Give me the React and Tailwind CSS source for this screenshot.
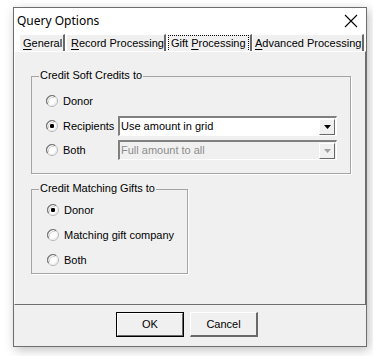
import React from "react";

const ui = { fontFamily: '"Liberation Sans", Arial, sans-serif' };

function Radio({ checked }) {
  return (
    <svg width="12" height="12" viewBox="0 0 12 12" className="shrink-0">
      <circle cx="6" cy="6" r="5.5" fill="#ffffff" stroke="#b4b4b4" strokeWidth="1" />
      <path d="M1.7 9.1 A5.3 5.3 0 0 1 9.1 1.7" fill="none" stroke="#7a7a7a" strokeWidth="1.2" />
      <path d="M2.8 8.2 A4.1 4.1 0 0 1 8.2 2.8" fill="none" stroke="#cfcfcf" strokeWidth="1" />
      <path d="M10 3 A5.3 5.3 0 0 1 3 10" fill="none" stroke="#e6e6e6" strokeWidth="1" />
      {checked && <rect x="4" y="4" width="4" height="4" rx="1.3" fill="#000" />}
    </svg>
  );
}

function Option({ checked, children, className = "" }) {
  return (
    <div className={`flex items-center gap-[5px] h-[14px] whitespace-nowrap ${className}`}>
      <Radio checked={checked} />
      <span className="text-[11px] text-black leading-none">{children}</span>
    </div>
  );
}

function Combo({ value, disabled }) {
  return (
    <div
      className={`flex items-center w-[219px] h-[20px] border-t-2 border-l-2 border-t-[#808080] border-l-[#808080] border-b border-r border-b-[#fff] border-r-[#fff] ${
        disabled ? "bg-[#f0f0f0]" : "bg-white"
      }`}
    >
      <span
        className={`flex-1 pl-[1px] text-[11px] leading-none whitespace-nowrap ${
          disabled ? "text-[#8d8d8d]" : "text-black"
        }`}
      >
        {value}
      </span>
      <div className="w-[16px] h-[16px] mr-[1px] bg-[#f0f0f0] border-t border-l border-t-[#fff] border-l-[#fff] border-b border-r border-b-[#696969] border-r-[#696969] flex items-center justify-center">
        <svg width="7" height="4" viewBox="0 0 7 4">
          <path d="M0 0 H7 L3.5 4 Z" fill={disabled ? "#a0a0a0" : "#000"} />
        </svg>
      </div>
    </div>
  );
}

function Group({ label, className = "", children }) {
  return (
    <div className={`relative border border-[#a5a5a5] shadow-[1px_1px_0_#ffffff] ${className}`}>
      <span className="absolute -top-[7px] left-[7px] px-[1px] bg-[#f0f0f0] text-[11px] leading-none text-black whitespace-nowrap">
        {label}
      </span>
      {children}
    </div>
  );
}

function Tab({ children, active, className = "" }) {
  return (
    <div
      className={`h-[17px] shrink-0 flex items-center whitespace-nowrap bg-[#f0f0f0] border-l border-t border-l-[#fff] border-t-[#fff] border-r-2 border-r-[#696969] text-[11px] leading-none text-black ${className}`}
    >
      {active ? (
        <span className="outline-1 outline-dotted outline-black outline-offset-[2px]">
          {children}
        </span>
      ) : (
        children
      )}
    </div>
  );
}

const U = ({ children }) => <span className="underline underline-offset-[2px]">{children}</span>;

export default function App() {
  return (
    <div className="w-[373px] h-[356px] bg-white overflow-hidden pt-[7px] pl-[13px]" style={ui}>
      <div className="w-[354px] h-[340px] border border-[#6e6e6e] bg-[#f0f0f0] shadow-[2px_3px_10px_rgba(0,0,0,0.25)] flex flex-col">
        <div className="h-[26px] bg-white flex items-center justify-between pl-[3px] pr-[8px]">
          <span
            className="text-[12px] text-black"
            style={{ fontFamily: '"Noto Sans", "Open Sans", sans-serif' }}
          >
            Query Options
          </span>
          <svg width="14" height="14" viewBox="0 0 14 14">
            <path d="M1 1 L13 13 M13 1 L1 13" stroke="#000" strokeWidth="1.1" />
          </svg>
        </div>
        <div className="h-[17px] flex pl-[5px] bg-white">
          <Tab className="w-[46px] pl-[3px]">
            <span><U>G</U>eneral</span>
          </Tab>
          <Tab className="w-[100px] pl-[4px] ml-[1px]">
            <span><U>R</U>ecord Processing</span>
          </Tab>
          <Tab active className="w-[85px] pl-[3px] ml-[1px]">
            <span>Gift <U>P</U>rocessing</span>
          </Tab>
          <Tab className="w-[112px] pl-[2px]">
            <span><U>A</U>dvanced Processing</span>
          </Tab>
        </div>
        <div className="h-[254px] border-t border-l border-t-[#fff] border-l-[#fff] border-b border-r border-b-[#6e6e6e] border-r-[#6e6e6e] pt-[24px] pl-[16px]">
          <Group label="Credit Soft Credits to" className="w-[320px] h-[98px]">
            <div className="pt-[17px] pl-[14px] flex flex-col">
              <Option>Donor</Option>
              <div className="flex items-center mt-[8px] h-[20px]">
                <Option checked className="w-[72px]">Recipients</Option>
                <Combo value="Use amount in grid" />
              </div>
              <div className="flex items-center mt-[4px] h-[20px]">
                <Option className="w-[72px]">Both</Option>
                <Combo value="Full amount to all" disabled />
              </div>
            </div>
          </Group>
          <Group label="Credit Matching Gifts to" className="w-[157px] h-[85px] mt-[15px]">
            <div className="pt-[13px] pl-[15px] flex flex-col gap-[11px]">
              <Option checked>Donor</Option>
              <Option>Matching gift company</Option>
              <Option>Both</Option>
            </div>
          </Group>
        </div>
        <div className="flex pt-[7px] pl-[102px] gap-[6px]">
          <div className="w-[68px] h-[25px] border border-black">
            <div className="w-full h-full border-t border-l border-t-[#fff] border-l-[#fff] border-b border-r border-b-[#696969] border-r-[#696969] flex items-center justify-center text-[11px] leading-none text-black">
              OK
            </div>
          </div>
          <div className="w-[68px] h-[25px] border-t border-l border-t-[#fff] border-l-[#fff] border-b-2 border-r-2 border-b-[#696969] border-r-[#696969] flex items-center justify-center text-[11px] leading-none text-black">
            Cancel
          </div>
        </div>
      </div>
    </div>
  );
}
